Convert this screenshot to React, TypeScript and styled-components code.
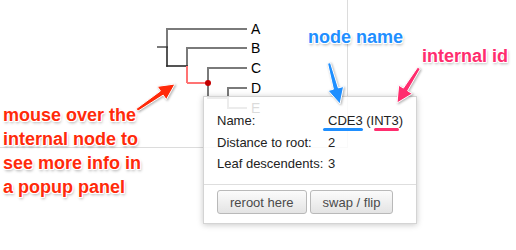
import React from 'react';
import styled, { createGlobalStyle } from 'styled-components';

const GlobalStyle = createGlobalStyle`
  html, body {
    margin: 0;
    padding: 0;
    background: #fff;
  }
  body {
    font-family: "Liberation Sans", Arial, sans-serif;
  }
`;

type Pt = [number, number];

// builds a fat arrow polygon from tail to tip
function arrowPoints(tail: Pt, tip: Pt, shaft = 5, head = 16, headLen = 16) {
  const dx = tip[0] - tail[0];
  const dy = tip[1] - tail[1];
  const len = Math.hypot(dx, dy);
  const ux = dx / len;
  const uy = dy / len;
  const nx = -uy;
  const ny = ux;
  const bx = tip[0] - ux * headLen;
  const by = tip[1] - uy * headLen;
  const pts: Pt[] = [
    [tail[0] + nx * shaft * 0.3, tail[1] + ny * shaft * 0.3],
    [bx + nx * shaft / 2, by + ny * shaft / 2],
    [bx + nx * head / 2, by + ny * head / 2],
    tip,
    [bx - nx * head / 2, by - ny * head / 2],
    [bx - nx * shaft / 2, by - ny * shaft / 2],
    [tail[0] - nx * shaft * 0.3, tail[1] - ny * shaft * 0.3],
  ];
  return pts.map((p) => `${p[0].toFixed(1)},${p[1].toFixed(1)}`).join(' ');
}

const leaves = [
  { name: 'A', y: 29 },
  { name: 'B', y: 48 },
  { name: 'C', y: 68 },
  { name: 'D', y: 88 },
  { name: 'E', y: 108 },
];

function Tree() {
  return (
    <TreeSvg width={348} height={148}>
      <g stroke="#7a7a7a" strokeWidth={2} fill="none" strokeLinecap="square">
        <line x1={158} y1={47} x2={167} y2={47} />
        <line x1={167} y1={29} x2={167} y2={47} />
        <line x1={167} y1={29} x2={246} y2={29} />
        <line x1={187} y1={48} x2={187} y2={66} />
        <line x1={187} y1={48} x2={246} y2={48} />
        <line x1={208} y1={68} x2={208} y2={98} />
        <line x1={208} y1={68} x2={246} y2={68} />
        <line x1={208} y1={98} x2={228} y2={98} />
        <line x1={228} y1={88} x2={228} y2={108} />
        <line x1={228} y1={88} x2={246} y2={88} />
        <line x1={228} y1={108} x2={246} y2={108} />
      </g>
      <g stroke="#2a2a2a" strokeWidth={1.6} fill="none" strokeLinecap="square">
        <line x1={167} y1={47} x2={167} y2={66} />
        <line x1={167} y1={66} x2={187} y2={66} />
      </g>
      <g stroke="#ff7373" strokeWidth={2} fill="none">
        <line x1={187} y1={66} x2={187} y2={83} />
        <line x1={187} y1={83} x2={208} y2={83} />
      </g>
      <circle cx={208} cy={83} r={3} fill="#c40000" />
      {leaves.map((l) => (
        <LeafLabel key={l.name} x={251} y={l.y + 5}>
          {l.name}
        </LeafLabel>
      ))}
    </TreeSvg>
  );
}

function App() {
  return (
    <Stage>
      <GlobalStyle />
      <TreeWidget>
        <Tree />
      </TreeWidget>

      <Popup>
        <InfoGrid>
          <Label>Name:</Label>
          <Value>CDE3 (INT3)</Value>
          <Label>Distance to root:</Label>
          <Value>2</Value>
          <Label>Leaf descendents:</Label>
          <Value>3</Value>
        </InfoGrid>
        <ButtonBar>
          <Button>reroot here</Button>
          <Button>swap / flip</Button>
        </ButtonBar>
      </Popup>

      <Marker $color="#1f8fff" $left={323} $top={128} $width={40} />
      <Marker $color="#ff2d6e" $left={374} $top={128} $width={25} />

      <Arrows width={516} height={250}>
        <g stroke="#fff" strokeWidth={1} strokeLinejoin="round">
          <polygon points={arrowPoints([329, 63], [340, 104])} fill="#1f8fff" />
          <polygon points={arrowPoints([419, 68], [397, 103])} fill="#ff2d6e" />
          <polygon points={arrowPoints([137, 110], [175, 84])} fill="#ff2a0a" />
        </g>
      </Arrows>

      <Note $color="#1f8fff" $left={308} $top={25}>
        node name
      </Note>
      <Note $color="#ff2d6e" $left={422} $top={44}>
        internal id
      </Note>
      <Note $color="#ff2a0a" $left={3} $top={103}>
        mouse over the
        <br />
        internal node to
        <br />
        see more info in
        <br />
        a popup panel
      </Note>
    </Stage>
  );
}

const Stage = styled.div`
  position: relative;
  width: 516px;
  height: 250px;
  overflow: hidden;
  background: #fff;
`;

const TreeWidget = styled.div`
  width: 348px;
  height: 148px;
  box-sizing: border-box;
  border-right: 1px solid #dcdcdc;
  border-bottom: 1px solid #dcdcdc;
`;

const TreeSvg = styled.svg`
  display: block;
`;

const LeafLabel = styled.text`
  font-family: "Liberation Sans", Arial, sans-serif;
  font-size: 14px;
  fill: #000;
`;

const Popup = styled.div`
  position: absolute;
  left: 203px;
  top: 96px;
  width: 214px;
  height: 128px;
  box-sizing: border-box;
  display: flex;
  flex-direction: column;
  background: rgba(255, 255, 255, 0.86);
  border: 1px solid #d4d4d4;
  box-shadow: 0 1px 6px rgba(0, 0, 0, 0.22);
  font-size: 13px;
  color: #222;
`;

const InfoGrid = styled.div`
  display: grid;
  grid-template-columns: 111px auto;
  grid-auto-rows: 21.5px;
  align-items: center;
  padding: 13px 13px 0;
  height: 88px;
  box-sizing: border-box;
  border-bottom: 1px solid #dedede;
`;

const Label = styled.span`
  white-space: nowrap;
`;

const Value = styled.span`
  white-space: nowrap;
`;

const ButtonBar = styled.div`
  display: flex;
  gap: 3px;
  padding: 5px 13px 0;
`;

const Button = styled.button`
  height: 24px;
  padding: 0 12px;
  font-family: "Liberation Sans", Arial, sans-serif;
  font-size: 13px;
  color: #4a4a4a;
  background: linear-gradient(#fbfbfb, #e4e4e4);
  border: 1px solid #b9b9b9;
  border-radius: 3px;
`;

const Marker = styled.div<{ $color: string; $left: number; $top: number; $width: number }>`
  position: absolute;
  left: ${(p) => p.$left}px;
  top: ${(p) => p.$top}px;
  width: ${(p) => p.$width}px;
  height: 3px;
  border-radius: 2px;
  background: ${(p) => p.$color};
`;

const Arrows = styled.svg`
  position: absolute;
  left: 0;
  top: 0;
  pointer-events: none;
  filter: drop-shadow(1px 1px 1px rgba(0, 0, 0, 0.3));
`;

const Note = styled.div<{ $color: string; $left: number; $top: number }>`
  position: absolute;
  left: ${(p) => p.$left}px;
  top: ${(p) => p.$top}px;
  font-family: "Liberation Sans", Arial, sans-serif;
  font-weight: bold;
  font-size: 18px;
  line-height: 24px;
  white-space: nowrap;
  color: ${(p) => p.$color};
  text-shadow: 1px 0 0 #fff, -1px 0 0 #fff, 0 1px 0 #fff, 0 -1px 0 #fff,
    1px 1px 0 #fff, -1px -1px 0 #fff, 1px -1px 0 #fff, -1px 1px 0 #fff,
    1px 2px 3px rgba(0, 0, 0, 0.35);
`;

export default App;
